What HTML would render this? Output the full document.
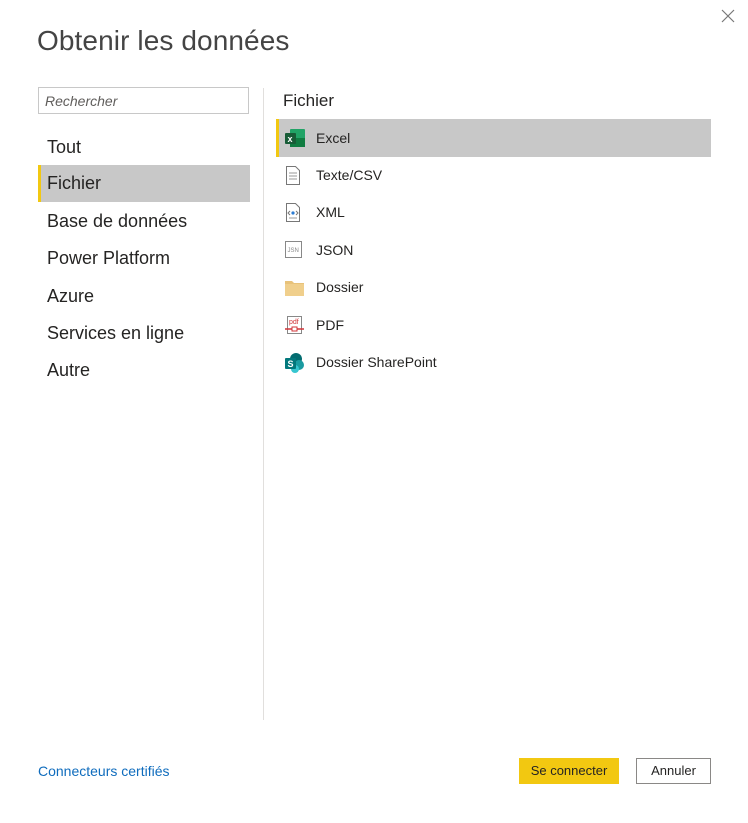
<!DOCTYPE html>
<html><head><meta charset="utf-8"><style>
*{margin:0;padding:0;box-sizing:border-box}
body{width:748px;height:823px;background:#fff;font-family:"Liberation Sans",sans-serif;position:relative;overflow:hidden;color:#252423}
.a{position:absolute}
h1{position:absolute;left:37px;top:25px;font-size:28px;font-weight:normal;color:#444;letter-spacing:0.1px}
.search{left:38px;top:87px;width:211px;height:27px;border:1px solid #c8c8c8;font-style:italic;color:#605e5c;font-size:14px;padding:5px 0 0 6px}
.nav{left:38px;width:212px;height:37px;font-size:18px;padding-left:9px;line-height:37px;color:#252423}
.sel{background:#c8c8c8;border-left:3px solid #f2c811;padding-left:6px}
.div{left:263px;top:88px;width:1px;height:632px;background:#e1dfdd}
.item{left:276px;width:435px;height:38px;font-size:14px;line-height:38px;padding-left:40px}
.item svg{position:absolute;left:9px;top:10px}
.btn{top:758px;height:26px;font-size:13px;text-align:center;line-height:26px}
</style></head><body>
<svg class="a" style="left:721px;top:9px" width="14" height="14"><path d="M1 1L13 13M13 1L1 13" stroke="#777" stroke-width="1.2"/></svg>
<h1>Obtenir les données</h1>
<div class="a search">Rechercher</div>
<div class="a nav" style="top:129px">Tout</div>
<div class="a nav sel" style="top:165px">Fichier</div>
<div class="a nav" style="top:203px">Base de données</div>
<div class="a nav" style="top:240px">Power Platform</div>
<div class="a nav" style="top:278px">Azure</div>
<div class="a nav" style="top:315px">Services en ligne</div>
<div class="a nav" style="top:352px">Autre</div>
<div class="a div"></div>
<div class="a" style="left:283px;top:91px;font-size:17px;color:#252423">Fichier</div>
<div class="a item" style="top:119px;background:#c8c8c8;border-left:3px solid #f2c811;padding-left:37px"><svg style="left:6px" width="20" height="18"><rect x="5" y="0" width="15" height="18" rx="1" fill="#21a366"/><rect x="5" y="9" width="15" height="9" fill="#107c41"/><rect x="0" y="4" width="11" height="11" rx="1" fill="#185c37"/><text x="2.5" y="13" font-size="9" font-weight="bold" fill="#fff" font-family="Liberation Sans">x</text></svg>Excel</div>
<div class="a item" style="top:156px"><svg width="16" height="19"><path d="M1.5 .5h9l4 4v14h-13z" fill="#fff" stroke="#777"/><path d="M4 7h8M4 10h8M4 13h8" stroke="#999"/></svg>Texte/CSV</div>
<div class="a item" style="top:193px"><svg width="16" height="19"><path d="M1.5 .5h9l4 4v14h-13z" fill="#fff" stroke="#777"/><circle cx="8" cy="10" r="1.6" fill="#2b7cd3"/><path d="M5 8l-2 2 2 2M11 8l2 2-2 2" stroke="#777" fill="none"/><path d="M4 15h8" stroke="#999"/></svg>XML</div>
<div class="a item" style="top:231px"><svg width="17" height="17"><rect x=".5" y=".5" width="16" height="16" fill="#fff" stroke="#888"/><text x="2.5" y="11" font-size="6" fill="#888" font-family="Liberation Sans">JSN</text></svg>JSON</div>
<div class="a item" style="top:268px"><svg width="19" height="17" style="top:12px"><path d="M0 1h7l2 2h10v13H0z" fill="#e8c27a"/><path d="M0 4h19v12H0z" fill="#f0cf8c"/></svg>Dossier</div>
<div class="a item" style="top:306px"><svg width="19" height="19"><rect x="2.5" y=".5" width="14" height="17" fill="#fff" stroke="#888"/><text x="4" y="8" font-size="7" fill="#d13438" font-family="Liberation Sans">pdf</text><path d="M0 13h19" stroke="#d13438" stroke-width="1.5"/><rect x="7" y="11" width="5" height="4" fill="#fff" stroke="#d13438"/></svg>PDF</div>
<div class="a item" style="top:343px"><svg width="20" height="20"><circle cx="11" cy="6" r="6" fill="#036c70"/><circle cx="14" cy="12" r="5" fill="#1a9ba1"/><circle cx="10" cy="16" r="4" fill="#37c6d0"/><rect x="0" y="5" width="11" height="11" rx="1" fill="#03787c"/><text x="2.5" y="14" font-size="9" font-weight="bold" fill="#fff" font-family="Liberation Sans">S</text></svg>Dossier SharePoint</div>
<div class="a" style="left:38px;top:763px;font-size:14px;color:#0f6cbd">Connecteurs certifiés</div>
<div class="a btn" style="left:519px;width:100px;background:#f2c811;color:#252423">Se connecter</div>
<div class="a btn" style="left:636px;width:75px;border:1px solid #8a8886;line-height:24px">Annuler</div>
</body></html>
